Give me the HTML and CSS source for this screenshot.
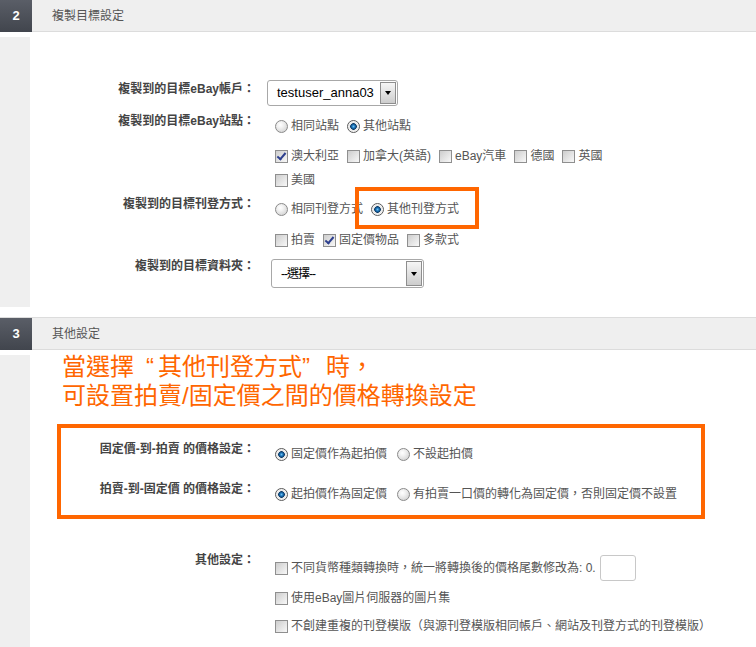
FILE: index.html
```html
<!DOCTYPE html>
<html lang="zh-Hant">
    <head>
        <meta charset="utf-8">
        <link rel="stylesheet" href="styles.css">
    </head>
    <body>
        <div class="sec-head sec-first">
            <span class="sec-num">2</span>
            <span class="sec-title">複製目標設定</span>
        </div>
        <div class="sec-body">
            <div class="side"></div>
            <div class="main main-copy">
                <div class="row row-account">
                    <div class="label">複製到的目標eBay帳戶：</div>
                    <div class="field">
                        <div class="sel sel-account">
                            <span class="sel-text">testuser_anna03</span>
                            <span class="sel-btn"></span>
                        </div>
                    </div>
                </div>
                <div class="row row-site">
                    <div class="label">複製到的目標eBay站點：</div>
                    <div class="field">
                        <div class="line">
                            <span class="opt"><span class="rd"></span>相同站點</span>
                            <span class="opt"><span class="rd on"></span>其他站點</span>
                        </div>
                        <div class="line line-sites">
                            <span class="opt"><span class="cb on"></span>澳大利亞</span>
                            <span class="opt"><span class="cb"></span>加拿大(英語)</span>
                            <span class="opt"><span class="cb"></span>eBay汽車</span>
                            <span class="opt"><span class="cb"></span>德國</span>
                            <span class="opt"><span class="cb"></span>英國</span>
                        </div>
                        <div class="line line-us">
                            <span class="opt"><span class="cb"></span>美國</span>
                        </div>
                    </div>
                </div>
                <div class="row row-format">
                    <div class="label">複製到的目標刊登方式：</div>
                    <div class="field">
                        <div class="line">
                            <span class="opt"><span class="rd"></span>相同刊登方式</span>
                            <span class="opt marked"><span class="rd on"></span>其他刊登方式</span>
                        </div>
                        <div class="line line-types">
                            <span class="opt"><span class="cb"></span>拍賣</span>
                            <span class="opt"><span class="cb on"></span>固定價物品</span>
                            <span class="opt"><span class="cb"></span>多款式</span>
                        </div>
                    </div>
                </div>
                <div class="row row-folder">
                    <div class="label">複製到的目標資料夾：</div>
                    <div class="field">
                        <div class="sel sel-folder">
                            <span class="sel-text">--選擇--</span>
                            <span class="sel-btn"></span>
                        </div>
                    </div>
                </div>
            </div>
        </div>

        <div class="sec-head">
            <span class="sec-num">3</span>
            <span class="sec-title">其他設定</span>
        </div>
        <div class="sec-body">
            <div class="side"></div>
            <div class="main main-other">
                <div class="note">
                    <div>當選擇<span class="q q-open">“</span>其他刊登方式<span class="q q-close">”</span>時，</div>
                    <div>可設置拍賣/固定價之間的價格轉換設定</div>
                </div>
                <div class="price-box">
                    <div class="row">
                        <div class="label label-box">固定價-到-拍賣 的價格設定：</div>
                        <div class="field">
                            <div class="line">
                                <span class="opt"><span class="rd on"></span>固定價作為起拍價</span>
                                <span class="opt"><span class="rd"></span>不設起拍價</span>
                            </div>
                        </div>
                    </div>
                    <div class="row row-second">
                        <div class="label label-box">拍賣-到-固定價 的價格設定：</div>
                        <div class="field">
                            <div class="line">
                                <span class="opt"><span class="rd on"></span>起拍價作為固定價</span>
                                <span class="opt"><span class="rd"></span>有拍賣一口價的轉化為固定價，否則固定價不設置</span>
                            </div>
                        </div>
                    </div>
                </div>
                <div class="row row-misc">
                    <div class="label">其他設定：</div>
                    <div class="field">
                        <div class="line line-tail">
                            <span class="opt"><span class="cb"></span>不同貨幣種類轉換時，統一將轉換後的價格尾數修改為: 0.</span>
                            <span class="num"></span>
                        </div>
                        <div class="line line-pics">
                            <span class="opt"><span class="cb"></span>使用eBay圖片伺服器的圖片集</span>
                        </div>
                        <div class="line line-dup">
                            <span class="opt"><span class="cb"></span>不創建重複的刊登模版（與源刊登模版相同帳戶、網站及刊登方式的刊登模版）</span>
                        </div>
                    </div>
                </div>
            </div>
        </div>
    </body>
</html>
```

FILE: styles.css
```css
body{
    margin: 0;
    background-color: #fff;
    font-family: "Liberation Sans", "Noto Sans CJK TC", sans-serif;
    font-size: 12px;
    line-height: 16px;
    color: #555;
}

/* section headers */
.sec-head{
    display: flex;
    align-items: center;
    height: 31px;
    background-color: #efefef;
    border-top: 1px solid #dcdcdc;
    border-bottom: 1px solid #dcdcdc;
}

.sec-first{
    margin-top: -1px;
}

.sec-num{
    align-self: flex-start;
    width: 32px;
    height: 32px;
    margin-bottom: -1px;
    display: flex;
    align-items: center;
    justify-content: center;
    background: linear-gradient(#5a5e67, #41454d);
    color: #fff;
    font-weight: bold;
    font-size: 13px;
}

.sec-title{
    margin-left: 20px;
    color: #555;
}

.sec-body{
    display: flex;
}

.side{
    width: 30px;
    flex-shrink: 0;
    margin: 5px 0 10px;
    background-color: #efefef;
}

.main{
    flex: 1;
}

.main-copy{
    padding: 48px 0 29px;
}

.main-other{
    padding: 0 0 30px;
}

/* form rows */
.row{
    display: flex;
}

.label{
    width: 225px;
    flex-shrink: 0;
    text-align: right;
    font-weight: bold;
    color: #444;
}

.label-box{
    width: 194px;
}

.field{
    padding-left: 20px;
}

.line{
    display: flex;
    align-items: center;
    height: 16px;
}

.opt{
    display: inline-flex;
    align-items: center;
    margin-right: 8px;
    white-space: nowrap;
}

.row-account .label{
    padding-top: 1px;
}

.row-account .field{
    padding-left: 12px;
}

.row-site{
    margin-top: 7px;
}

.row-site .field, .row-format .field{
    padding-top: 5px;
}

.line-sites{
    margin-top: 14px;
}

.line-us{
    margin-top: 8px;
}

.row-format{
    margin-top: 8px;
}

.line-types{
    margin-top: 15px;
}

.row-folder{
    margin-top: 10px;
}

.row-folder .field{
    padding-left: 16px;
    padding-top: 1px;
}

/* annotation frame around the chosen option */
.marked{
    padding: 4px 10px 2px 6px;
    margin: -4px 0 -2px -6px;
    outline: 4px solid #ff6600;
    outline-offset: 6px;
}

/* fake selects */
.sel{
    display: flex;
    align-items: center;
    box-sizing: border-box;
    padding: 0 1px 0 9px;
    background-color: #fff;
    border: 1px solid #a8a8a8;
    border-radius: 3px;
}

.sel-account{
    width: 131px;
    height: 26px;
}

.sel-folder{
    width: 153px;
    height: 29px;
}

.sel-text{
    flex: 1;
    color: #000;
    font-size: 13px;
}

.sel-folder .sel-text{
    font-size: 12px;
    letter-spacing: -1px;
}

.sel-btn{
    align-self: stretch;
    width: 14px;
    margin: 1px 0;
    display: flex;
    align-items: center;
    justify-content: center;
    border: 1px solid #8e8e8e;
    background: linear-gradient(#f6f6f6, #cdcdcd);
}

.sel-btn::after{
    content: "";
    border-left: 3.5px solid transparent;
    border-right: 3.5px solid transparent;
    border-top: 4px solid #000;
}

/* radios and checkboxes */
.rd, .cb{
    position: relative;
    width: 13px;
    height: 13px;
    box-sizing: border-box;
    margin-right: 3px;
    flex-shrink: 0;
}

.rd{
    border-radius: 50%;
    border: 1px solid #8a8a8a;
    background: radial-gradient(circle at 40% 35%, #ffffff 0, #f2f2f2 30%, #cfcfcf 90%);
}

.rd.on{
    border-color: #5a5a5a;
    background: radial-gradient(circle at 50% 50%, #6fc2f2 0, #1b73b8 1.6px, #0c3a66 3px, #e4e4e4 3.6px, #f8f8f8 5.5px);
}

.cb{
    border: 1px solid #8f8f8f;
    background: linear-gradient(135deg, #cdcdcd, #f8f8f8);
}

.cb.on::after{
    content: "";
    position: absolute;
    left: 3px;
    top: 0px;
    width: 3px;
    height: 7px;
    border-right: 2px solid #2d3f8e;
    border-bottom: 2px solid #2d3f8e;
    transform: rotate(40deg);
}

/* section 3 */
.note{
    margin: 2px 0 0 32px;
    font-size: 24px;
    line-height: 29px;
    color: #ff6600;
}

.q{
    display: inline-block;
    width: 24px;
}

.q-open{
    text-align: right;
    padding-right: 4px;
    width: 20px;
}

.q-close{
    text-align: left;
}

.price-box{
    box-sizing: border-box;
    width: 648px;
    margin: 14px 0 0 27px;
    padding: 13px 0;
    border: 4px solid #ff6600;
}

.price-box .field{
    padding-top: 5px;
}

.row-second{
    margin-top: 19px;
}

.price-box .opt{
    margin-right: 10px;
}

.row-misc{
    margin-top: 33px;
}

.row-misc .field{
    padding-top: 3px;
}

.line-tail{
    height: 26px;
}

.line-pics{
    margin-top: 9px;
}

.line-dup{
    margin-top: 12px;
}

.num{
    width: 36px;
    height: 26px;
    box-sizing: border-box;
    margin-left: -4px;
    border: 1px solid #c8c8c8;
    border-radius: 3px;
}
```
